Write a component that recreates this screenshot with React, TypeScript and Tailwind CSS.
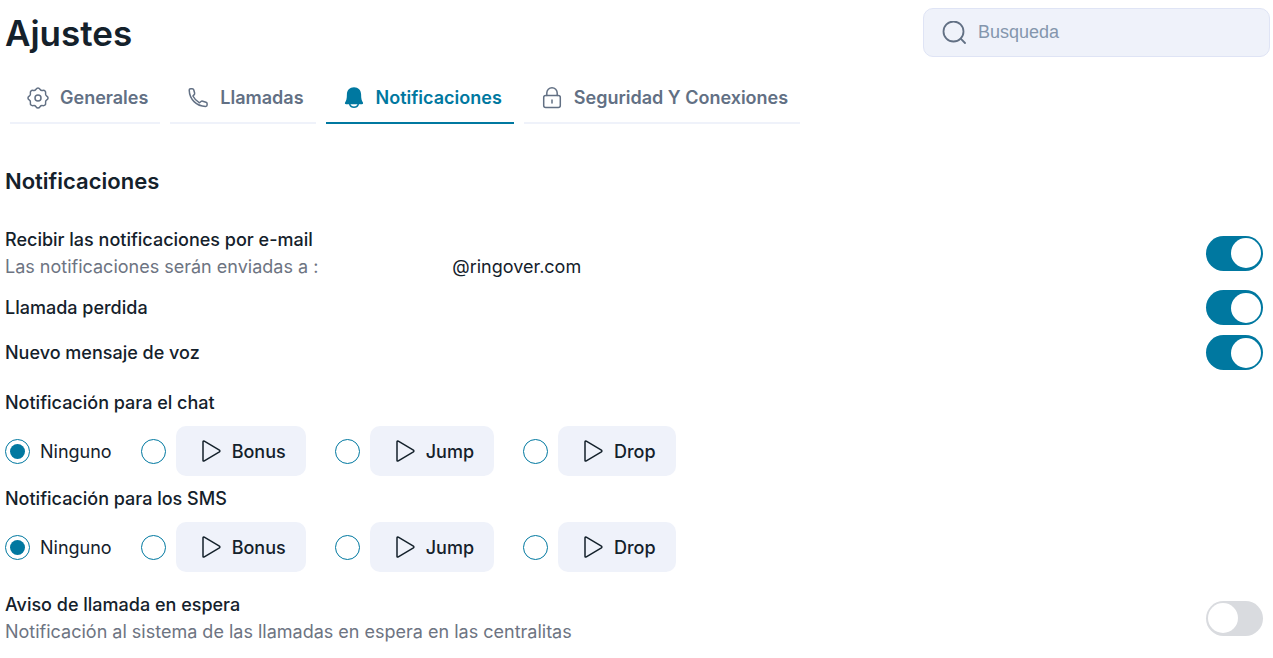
import { useState } from "react";
import type { ReactNode } from "react";
import clsx from "clsx";

const iconProps = {
  width: 24,
  height: 24,
  viewBox: "0 0 24 24",
  fill: "none",
  stroke: "currentColor",
  strokeWidth: 1.5,
  strokeLinecap: "round",
  strokeLinejoin: "round",
  "aria-hidden": true,
} as const;

function GearIcon() {
  return (
    <svg {...iconProps}>
      <circle cx="12" cy="12" r="3" />
      <path d="M9.800 3.500Q12 .4 14.200 3.500Q15 4.700 16.500 4.400Q20.100 3.900 19.600 7.500Q19.300 9 20.500 9.800Q23.600 12 20.500 14.200Q19.300 15 19.600 16.500Q20.100 20.100 16.500 19.600Q15 19.300 14.200 20.500Q12 23.600 9.800 20.500Q9 19.300 7.500 19.600Q3.900 20.100 4.400 16.500Q4.700 15 3.500 14.200Q.4 12 3.500 9.800Q4.700 9 4.400 7.500Q3.900 3.900 7.500 4.400Q9 4.700 9.800 3.500Z" />
    </svg>
  );
}

function PhoneIcon() {
  return (
    <svg {...iconProps}>
      <path d="M3.200 4Q3.200 2.800 4.600 2.800L6.200 2.800Q7.500 2.800 7.800 4L8.600 7Q8.900 8.100 8 8.900L6.900 10Q9.100 14.300 13.500 16.800L15 15.500Q15.700 14.900 16.700 15.200L20 16.300Q21.100 16.700 21.100 17.700L21.100 19Q21.100 20.400 19.600 20.400C10.400 20.200 3.500 13.400 3.200 4Z" />
    </svg>
  );
}

function BellIcon() {
  return (
    <svg {...iconProps}>
      <path
        d="M12 1.200c-4.300 0-7.100 3.100-7.100 7.100 0 4.600-.7 6.500-1.700 8-.7 1-.2 2 1 2h15.600c1.200 0 1.700-1 1-2-1-1.500-1.700-3.400-1.700-8 0-4-2.800-7.100-7.100-7.100z"
        fill="currentColor"
        stroke="none"
      />
      <path d="M7.800 18.500a4.400 3.900 0 0 0 8.400 0" />
    </svg>
  );
}

function LockIcon() {
  return (
    <svg {...iconProps}>
      <rect x="3.700" y="9.500" width="16.600" height="12" rx="2" />
      <path d="M6.800 9.500V7a5.200 5.200 0 0 1 10.400 0v2.500M12 14v3" />
    </svg>
  );
}

function SearchIcon() {
  return (
    <svg {...iconProps} className="shrink-0" strokeWidth={1.8}>
      <circle cx="11.500" cy="10.500" r="10" />
      <path d="m18.700 17.700 4.300 4.300" />
    </svg>
  );
}

function PlayIcon() {
  return (
    <svg {...iconProps}>
      <path d="M3 3v18.200q0 1.300 1.300.7L19 13.200q1.800-1.200 0-2.400L4.300 2.200Q3 1.600 3 3z" />
    </svg>
  );
}

const tabs = [
  { label: "Generales", Icon: GearIcon },
  { label: "Llamadas", Icon: PhoneIcon },
  { label: "Notificaciones", Icon: BellIcon },
  { label: "Seguridad Y Conexiones", Icon: LockIcon },
];

const sounds = ["Bonus", "Jump", "Drop"];

interface SwitchRowProps {
  id: string;
  title: string;
  defaultChecked?: boolean;
  className?: string;
  children?: ReactNode;
}

function SwitchRow({ id, title, defaultChecked, className, children }: SwitchRowProps) {
  return (
    <div className={clsx("flex items-center justify-between pr-[7px]", className)}>
      <div>
        <label htmlFor={id} className="block font-medium">
          {title}
        </label>
        {children}
      </div>
      <input
        id={id}
        type="checkbox"
        role="switch"
        defaultChecked={defaultChecked}
        className="flex h-[35px] w-[57px] shrink-0 cursor-pointer appearance-none items-center rounded-full bg-[#d9dbdf] px-[2px] transition-colors before:size-[30px] before:rounded-full before:bg-white before:transition-transform checked:bg-[#0078a0] checked:before:translate-x-[23px]"
      />
    </div>
  );
}

const radioClass =
  "grid size-[25px] shrink-0 cursor-pointer appearance-none place-items-center rounded-full border border-[#0078a0] bg-white before:size-[15px] before:rounded-full checked:before:bg-[#0078a0]";

function SoundPicker({ name, title }: { name: string; title: string }) {
  const [value, setValue] = useState("Ninguno");

  return (
    <fieldset>
      <legend className="leading-[26px] font-medium">{title}</legend>
      <div className="mt-[10px] flex flex-wrap items-center gap-x-[29px]">
        <label className="flex cursor-pointer items-center gap-[10px]">
          <input
            type="radio"
            name={name}
            checked={value === "Ninguno"}
            onChange={() => setValue("Ninguno")}
            className={radioClass}
          />
          Ninguno
        </label>
        {sounds.map((sound) => (
          <div key={sound} className="flex items-center gap-[10px]">
            <input
              type="radio"
              name={name}
              aria-label={sound}
              checked={value === sound}
              onChange={() => setValue(sound)}
              className={radioClass}
            />
            <button
              type="button"
              className="flex h-[50px] cursor-pointer items-center gap-2 rounded-[10px] bg-[#eff2fa] pr-5 pl-6 font-medium"
            >
              <PlayIcon />
              {sound}
            </button>
          </div>
        ))}
      </div>
    </fieldset>
  );
}

export default function App() {
  const [activeTab, setActiveTab] = useState("Notificaciones");

  return (
    <main className="bg-white pt-2 pr-[3px] pb-3 pl-[5px] font-['Inter',sans-serif] text-[18px] leading-[27px] text-[#14212b]">
      <header className="flex items-center justify-between">
        <h1 className="text-[35px] leading-[48px] font-semibold">Ajustes</h1>
        <label className="flex h-[49px] w-[347px] items-center gap-3 rounded-[10px] border border-[#dfe4f5] bg-[#eff2fa] px-[18px] text-[#627084]">
          <SearchIcon />
          <input
            type="search"
            placeholder="Busqueda"
            aria-label="Busqueda"
            className="min-w-0 flex-1 bg-transparent font-['Liberation_Sans',sans-serif] outline-none placeholder:text-[#8496ad]"
          />
        </label>
      </header>

      <nav className="mt-4 flex gap-[10px] px-[5px]">
        {tabs.map(({ label, Icon }) => (
          <button
            key={label}
            type="button"
            aria-current={activeTab === label ? "page" : undefined}
            onClick={() => setActiveTab(label)}
            className={clsx(
              "flex h-[51px] cursor-pointer items-center gap-[10px] border-b-2 pr-3 pl-4 font-semibold",
              activeTab === label
                ? "border-[#0078a0] text-[#0078a0]"
                : "border-[#eff2fa] text-[#627084]"
            )}
          >
            <Icon />
            {label}
          </button>
        ))}
      </nav>

      <section className="mt-[41px]">
        <h2 className="text-[22px] leading-8 font-semibold">Notificaciones</h2>

        <SwitchRow
          id="email"
          title="Recibir las notificaciones por e-mail"
          defaultChecked
          className="mt-[29px]"
        >
          <p className="flex gap-[134px]">
            <span className="text-[#6d7482]">Las notificaciones serán enviadas a :</span>
            <span>@ringover.com</span>
          </p>
        </SwitchRow>
        <SwitchRow id="missed" title="Llamada perdida" defaultChecked className="mt-[10px]" />
        <SwitchRow id="voicemail" title="Nuevo mensaje de voz" defaultChecked className="mt-[10px]" />

        <div className="mt-5 flex flex-col gap-[10px]">
          <SoundPicker name="chat" title="Notificación para el chat" />
          <SoundPicker name="sms" title="Notificación para los SMS" />
        </div>

        <SwitchRow id="waiting" title="Aviso de llamada en espera" className="mt-[19px]">
          <p className="text-[#6d7482]">Notificación al sistema de las llamadas en espera en las centralitas</p>
        </SwitchRow>
      </section>
    </main>
  );
}
